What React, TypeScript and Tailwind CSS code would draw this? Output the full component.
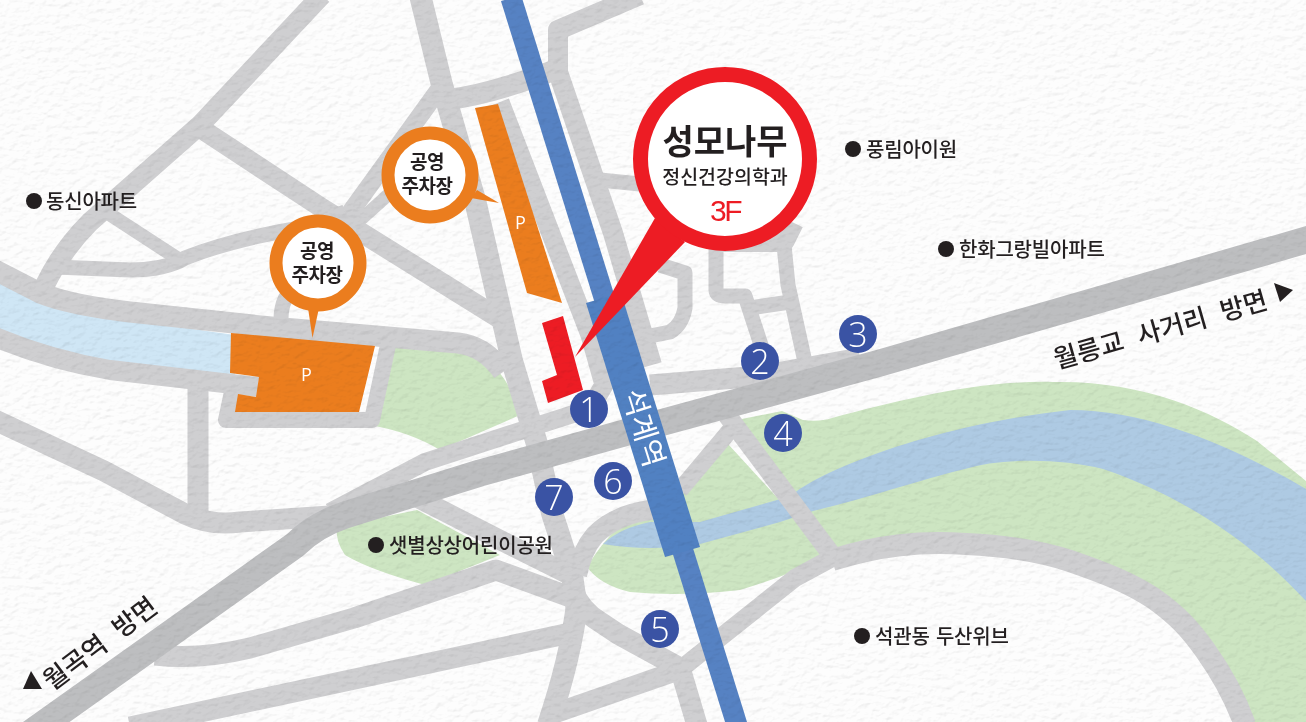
import React from 'react';

const KR = "font-['Noto_Sans_CJK_KR','Noto_Sans',sans-serif]";

// [path, stroke width]
const roads: [string, number][] = [
  ['M322,-5 L200,125 L90,222 Q62,250 45,285', 20],
  ['M200,128 L325,210 L505,322', 20],
  ['M420,-5 L442,85 L475,200 L512,361 L537,444 L552,513 L572,575 L577,610', 22],
  ['M440,88 L349,214', 18],
  ['M358,222 L398,186', 13],
  ['M55,267 L130,270 Q165,270 185,258 Q230,240 300,228 L345,212', 15],
  ['M100,208 L180,260', 14],
  ['M-5,270 L40,293 Q70,305 130,312 L271,327 L458,343 Q485,346 503,372', 21],
  ['M-5,337 Q50,360 110,370 L258,387', 20],
  ['M198,385 L198,512', 21],
  ['M-5,420 L104,471 L185,514 Q210,526 240,522 L330,516', 21],
  ['M388,345 L372,420 L226,420 L232,392', 16],
  ['M292,290 Q280,300 281,325', 15],
  ['M330,512 L425,462 L517,432 L592,408', 18],
  ['M418,498 L510,545 L570,575', 20],
  ['M155,655 Q200,660 250,648 L354,618 L496,570 L570,597', 21],
  ['M130,727 L575,632', 21],
  ['M577,605 Q570,660 548,725', 22],
  ['M550,715 L685,668', 20],
  ['M573,590 Q580,610 600,622 L618,634 L680,668 L697,725', 21],
  ['M682,668 L795,578 L832,558', 18],
  ['M832,560 C880,545 920,541 966,544 C1010,546 1040,551 1070,561 C1105,573 1130,583 1153,598 C1180,617 1192,632 1205,650 C1225,678 1236,700 1245,725', 22],
  ['M727,415 L834,558', 19],
  ['M732,428 L680,490', 17],
  ['M672,502 L650,510 Q615,515 595,535 Q582,550 577,575', 20],
  ['M445,100 Q490,95 560,68', 21],
  ['M640,-5 L558,30 L558,72 L613,233 L652,365', 20],
  ['M500,102 L590,335 L604,385 L592,405', 19],
  ['M650,385 L760,376 L860,358', 21],
  ['M600,180 L640,184', 15],
  ['M660,265 L685,273 L685,308 Q682,325 670,332 L640,338', 15],
  ['M716,245 L716,290 Q716,296 725,296 L745,296 L762,348', 15],
  ['M783,235 L788,285 L805,362', 15],
  ['M750,308 L790,302', 15],
  ['M716,240 L783,240 L792,222', 24],
];

const App: React.FC = () => {
  return (
    <div className={`relative w-[1306px] h-[722px] overflow-hidden bg-[#fdfdfd] ${KR}`}>
      {/* base map */}
      <svg className="absolute inset-0" width="1306" height="722" viewBox="0 0 1306 722">
        <path d="M0,275 L40,300 L130,320 L235,335 L235,375 L130,365 L50,355 L0,330 Z" fill="#cfe6f5" />
        <path d="M390,348 Q430,345 470,352 Q495,362 508,385 L520,415 L440,450 Q410,432 370,425 Z" fill="#cde5c2" />
        <path d="M330,528 L417,510 L500,555 L425,585 Q370,570 345,555 Q335,540 337,528 Z" fill="#cde5c2" />
        <path d="M737,420 L782,411 L803,420 Q820,422 832,418 C900,400 980,380 1053,382 C1140,380 1210,410 1257,441 L1306,481 L1306,722 L1240,722 C1200,640 1130,570 1040,550 C960,530 880,540 830,555 Z" fill="#cde5c2" />
        <path d="M728,444 L830,555 Q790,575 740,590 Q680,597 630,592 Q600,585 587,567 Q600,545 620,525 L660,510 L684,493 Z" fill="#cde5c2" />
        <path d="M603,544 Q620,528 650,522 L700,522 L777,500 Q790,497 797,491 C840,462 945,424 1070,410 C1150,410 1236,448 1306,489 L1306,601 C1250,540 1180,495 1103,469 C1060,458 1000,458 965,469 C920,480 860,500 813,511 L780,522 L700,544 Q650,552 603,544 Z" fill="#aecae3" />
        <g fill="none" stroke="#cfcfd1" strokeLinejoin="round">
          {roads.map(([d, w]) => (
            <path key={d} d={d} strokeWidth={w} />
          ))}
        </g>
        <polygon points="231,333 375,346 359,412 235,412 238,394 256,397 259,377 230,373" fill="#eb7d1e" />
        <polygon points="475,108 498,104 562,303 527,293" fill="#eb7d1e" />
        <path d="M1320,236 L880,363 L660,423 L480,473 L345,515 Q315,525 295,545 L28,735" fill="none" stroke="#bdbec0" strokeWidth="27" strokeLinejoin="round" />
        <line x1="511" y1="-2" x2="737" y2="725" stroke="#5682c3" strokeWidth="21" />
        <polygon points="586,303 621,293 700,547 665,557" fill="#5181c2" />
        <polygon points="542,323 563,316 583,390 548,403 542,381 557,375" fill="#ed1c24" />
      </svg>

      {/* paper grain */}
      <svg className="absolute inset-0 mix-blend-multiply" width="1306" height="722">
        <filter id="paper" x="0" y="0" width="100%" height="100%">
          <feTurbulence type="fractalNoise" baseFrequency="0.12 0.18" numOctaves="3" seed="7" />
          <feDiffuseLighting surfaceScale="0.55" diffuseConstant="1.15" lightingColor="#ffffff">
            <feDistantLight azimuth="60" elevation="60" />
          </feDiffuseLighting>
        </filter>
        <rect width="1306" height="722" filter="url(#paper)" />
      </svg>

      {/* pins */}
      <svg className="absolute inset-0" width="1306" height="722" viewBox="0 0 1306 722">
        <polygon points="308,308 319,308 312.5,338" fill="#eb7d1e" />
        <circle cx="318" cy="263" r="42" fill="#fff" stroke="#eb7d1e" strokeWidth="13" />
        <polygon points="477,190 471,198 499,203" fill="#eb7d1e" />
        <circle cx="430" cy="175" r="42" fill="#fff" stroke="#eb7d1e" strokeWidth="13" />
        <polygon points="655,218 685,242 575,357" fill="#ed1c24" />
        <circle cx="725" cy="159" r="84.5" fill="#fff" stroke="#ed1c24" strokeWidth="15" />
        <polygon points="1274,283 1293,290 1280,302" fill="#231f20" />
        <polygon points="23,689 42,689 31,671" fill="#231f20" />
        <circle cx="34" cy="201" r="8" fill="#231f20" />
        <circle cx="853" cy="149" r="8" fill="#231f20" />
        <circle cx="946" cy="249" r="8" fill="#231f20" />
        <circle cx="376" cy="545" r="8" fill="#231f20" />
        <circle cx="862" cy="636" r="8" fill="#231f20" />
      </svg>

      {/* parking labels */}
      <span className="absolute left-[515px] top-[210px] text-[18px] leading-6 text-white font-['Open_Sans',sans-serif]">P</span>
      <span className="absolute left-[301px] top-[362px] text-[18px] leading-6 text-white font-['Open_Sans',sans-serif]">P</span>

      <div className="absolute left-[267px] top-[238px] w-[100px] text-center text-[19px] leading-[24px] font-semibold tracking-[-0.5px] text-[#231f20]">
        공영<br />주차장
      </div>
      <div className="absolute left-[377px] top-[149px] w-[100px] text-center text-[19px] leading-[24px] font-semibold tracking-[-0.5px] text-[#231f20]">
        공영<br />주차장
      </div>

      {/* clinic */}
      <div className="absolute left-[640px] top-[116px] w-[170px] flex flex-col items-center text-[#231f20]">
        <span className="text-[34px] leading-[48px] font-semibold whitespace-nowrap">성모나무</span>
        <span className="text-[19.5px] leading-[24px] font-medium whitespace-nowrap">정신건강의학과</span>
        <span className="mt-[6px] text-[30px] leading-[34px] tracking-[-2.5px] text-[#ed1c24] font-['Liberation_Sans',sans-serif]">3F</span>
      </div>

      {/* places */}
      <span className="absolute left-[46px] top-[186px] text-[20px] leading-[30px] font-medium tracking-[-0.2px] whitespace-nowrap text-[#231f20]">동신아파트</span>
      <span className="absolute left-[866px] top-[134px] text-[20px] leading-[30px] font-medium tracking-[-0.2px] whitespace-nowrap text-[#231f20]">풍림아이원</span>
      <span className="absolute left-[959px] top-[234px] text-[20px] leading-[30px] font-medium tracking-[-0.2px] whitespace-nowrap text-[#231f20]">한화그랑빌아파트</span>
      <span className="absolute left-[389px] top-[530px] text-[20px] leading-[30px] font-medium tracking-[-0.2px] whitespace-nowrap text-[#231f20]">샛별상상어린이공원</span>
      <span className="absolute left-[875px] top-[621px] text-[20px] leading-[30px] font-medium tracking-[-0.2px] whitespace-nowrap [word-spacing:2px] text-[#231f20]">석관동 두산위브</span>

      {/* direction labels */}
      <span className="absolute left-[1040px] top-[311px] w-[240px] text-center text-[26px] leading-[34px] font-medium whitespace-nowrap [word-spacing:9px] rotate-[-16deg] text-[#231f20]">월릉교 사거리 방면</span>
      <span className="absolute left-[19px] top-[625px] w-[160px] text-center text-[26px] leading-[34px] font-medium whitespace-nowrap [word-spacing:9px] rotate-[-37deg] text-[#231f20]">월곡역 방면</span>
      <span className="absolute left-[596px] top-[410px] w-[100px] text-center text-[29px] leading-[34px] whitespace-nowrap rotate-[72.7deg] text-white">석계역</span>

      {/* exit badges */}
      <span className="absolute left-[570px] top-[390px] w-[38px] h-[38px] rounded-full bg-[#3a53a4] flex items-center justify-center text-[34px] leading-none font-light text-white font-['Open_Sans',sans-serif]">1</span>
      <span className="absolute left-[741px] top-[342px] w-[38px] h-[38px] rounded-full bg-[#3a53a4] flex items-center justify-center text-[34px] leading-none font-light text-white font-['Open_Sans',sans-serif]">2</span>
      <span className="absolute left-[839px] top-[315px] w-[38px] h-[38px] rounded-full bg-[#3a53a4] flex items-center justify-center text-[34px] leading-none font-light text-white font-['Open_Sans',sans-serif]">3</span>
      <span className="absolute left-[764px] top-[414px] w-[38px] h-[38px] rounded-full bg-[#3a53a4] flex items-center justify-center text-[34px] leading-none font-light text-white font-['Open_Sans',sans-serif]">4</span>
      <span className="absolute left-[641px] top-[610px] w-[38px] h-[38px] rounded-full bg-[#3a53a4] flex items-center justify-center text-[34px] leading-none font-light text-white font-['Open_Sans',sans-serif]">5</span>
      <span className="absolute left-[594px] top-[462px] w-[38px] h-[38px] rounded-full bg-[#3a53a4] flex items-center justify-center text-[34px] leading-none font-light text-white font-['Open_Sans',sans-serif]">6</span>
      <span className="absolute left-[535px] top-[478px] w-[38px] h-[38px] rounded-full bg-[#3a53a4] flex items-center justify-center text-[34px] leading-none font-light text-white font-['Open_Sans',sans-serif]">7</span>
    </div>
  );
};

export default App;
